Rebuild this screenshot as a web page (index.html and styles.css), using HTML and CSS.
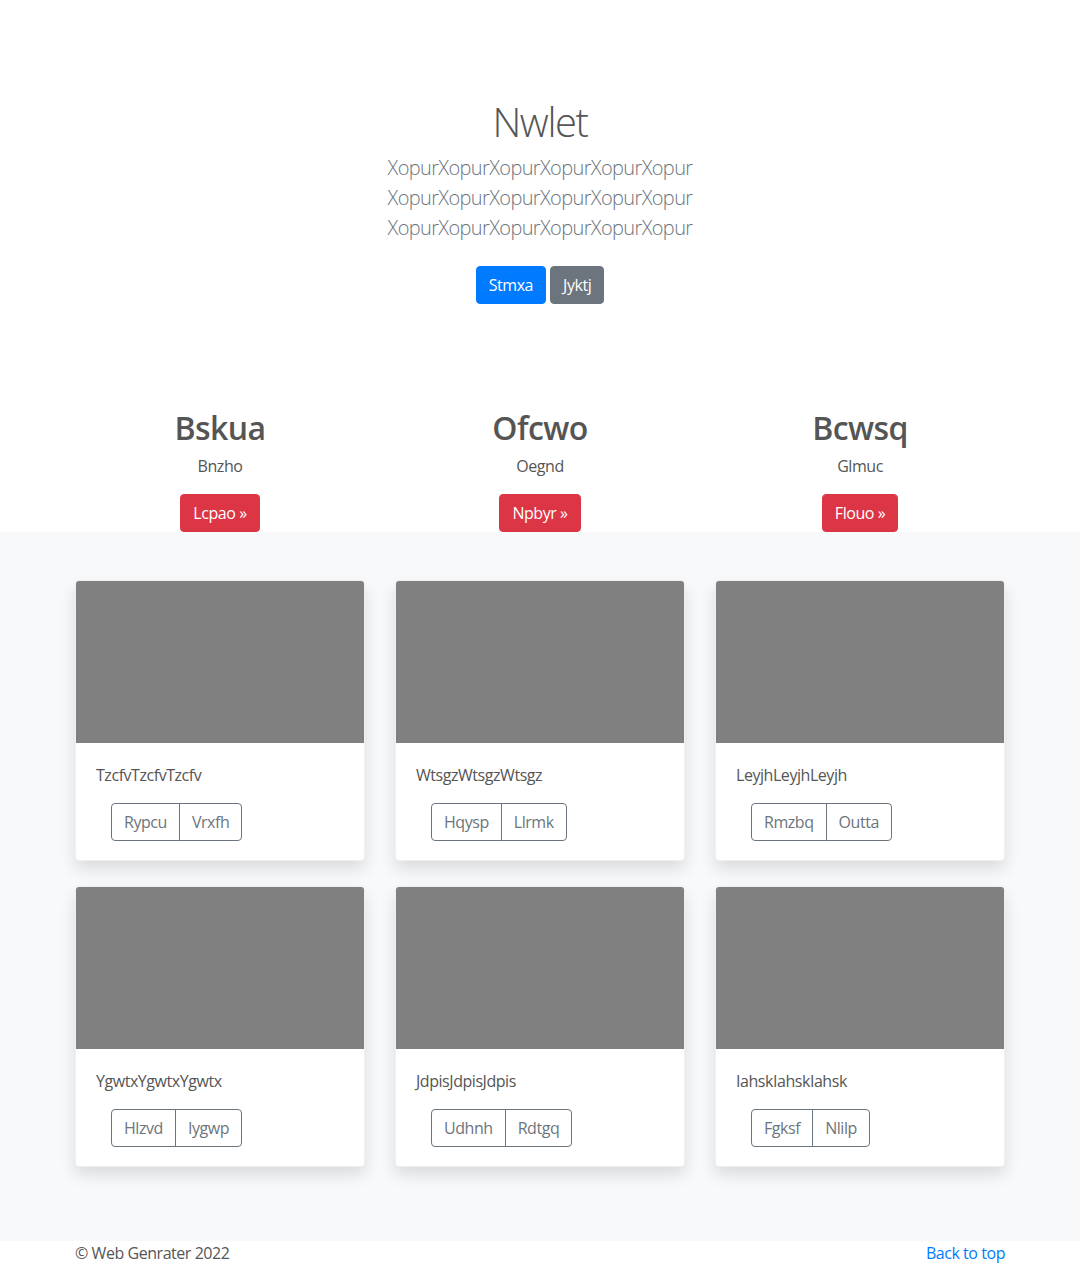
FILE: index.html
```html
<!DOCTYPE html>
<html lang="en">
<head>
<meta charset="utf-8">
<title>Nwlet</title>
<link rel="stylesheet" href="styles.css">
</head>
<body>
<section class="hero">
  <h1 class="hero-title">Nwlet</h1>
  <p class="lead">XopurXopurXopurXopurXopurXopur<br>XopurXopurXopurXopurXopurXopur<br>XopurXopurXopurXopurXopurXopur</p>
  <p class="hero-actions">
    <a class="btn btn-primary" href="#">Stmxa</a>
    <a class="btn btn-secondary" href="#">Jyktj</a>
  </p>
</section>

<section class="marketing">
  <div class="container row3">
    <div class="feature">
      <h2>Bskua</h2>
      <p>Bnzho</p>
      <a class="btn btn-danger" href="#">Lcpao &raquo;</a>
    </div>
    <div class="feature">
      <h2>Ofcwo</h2>
      <p>Oegnd</p>
      <a class="btn btn-danger" href="#">Npbyr &raquo;</a>
    </div>
    <div class="feature">
      <h2>Bcwsq</h2>
      <p>Glmuc</p>
      <a class="btn btn-danger" href="#">Flouo &raquo;</a>
    </div>
  </div>
</section>

<section class="album">
  <div class="container grid">
    <div class="card">
      <div class="card-img"></div>
      <div class="card-body">
        <p class="card-text">TzcfvTzcfvTzcfv</p>
        <div class="btn-group"><a class="btn btn-outline" href="#">Rypcu</a><a class="btn btn-outline" href="#">Vrxfh</a></div>
      </div>
    </div>
    <div class="card">
      <div class="card-img"></div>
      <div class="card-body">
        <p class="card-text">WtsgzWtsgzWtsgz</p>
        <div class="btn-group"><a class="btn btn-outline" href="#">Hqysp</a><a class="btn btn-outline" href="#">Llrmk</a></div>
      </div>
    </div>
    <div class="card">
      <div class="card-img"></div>
      <div class="card-body">
        <p class="card-text">LeyjhLeyjhLeyjh</p>
        <div class="btn-group"><a class="btn btn-outline" href="#">Rmzbq</a><a class="btn btn-outline" href="#">Outta</a></div>
      </div>
    </div>
    <div class="card">
      <div class="card-img"></div>
      <div class="card-body">
        <p class="card-text">YgwtxYgwtxYgwtx</p>
        <div class="btn-group"><a class="btn btn-outline" href="#">Hlzvd</a><a class="btn btn-outline" href="#">Iygwp</a></div>
      </div>
    </div>
    <div class="card">
      <div class="card-img"></div>
      <div class="card-body">
        <p class="card-text">JdpisJdpisJdpis</p>
        <div class="btn-group"><a class="btn btn-outline" href="#">Udhnh</a><a class="btn btn-outline" href="#">Rdtgq</a></div>
      </div>
    </div>
    <div class="card">
      <div class="card-img"></div>
      <div class="card-body">
        <p class="card-text">IahskIahskIahsk</p>
        <div class="btn-group"><a class="btn btn-outline" href="#">Fgksf</a><a class="btn btn-outline" href="#">Nlilp</a></div>
      </div>
    </div>
  </div>
</section>

<footer class="footer">
  <div class="container footer-row">
    <span>&copy; Web Genrater 2022</span>
    <a class="top-link" href="#">Back to top</a>
  </div>
</footer>
</body>
</html>
```

FILE: styles.css
```css
* { box-sizing: border-box; }
body {
  margin: 0;
  font-family: "Open Sans", "Noto Sans", "Liberation Sans", sans-serif;
  font-size: 16px;
  line-height: 1.5;
  letter-spacing: -0.45px;
  color: #555;
  background: #fff;
}
p { margin: 0; }
.container {
  width: 930px;
  margin: 0 auto;
}
.hero {
  text-align: center;
  padding-top: 98px;
}
.hero-title {
  margin: 0 0 7px;
  font-size: 40px;
  line-height: 48px;
  font-weight: 300;
  letter-spacing: -1.4px;
  color: #555;
}
.lead {
  font-size: 20px;
  line-height: 30px;
  font-weight: 300;
  letter-spacing: -0.63px;
  color: #6c757d;
  margin-bottom: 23px;
}
.hero-actions {
  display: flex;
  justify-content: center;
  gap: 4px;
}
.btn {
  display: inline-block;
  font-size: 16px;
  line-height: 24px;
  padding: 6px 12px;
  border: 1px solid transparent;
  border-radius: 4px;
  text-decoration: none;
  color: #fff;
}
.btn-primary { background: #007bff; border-color: #007bff; }
.btn-secondary { background: #6c757d; border-color: #6c757d; }
.btn-danger { background: #dc3545; border-color: #dc3545; }

.marketing { padding-top: 105px; }
.row3 {
  display: grid;
  grid-template-columns: repeat(3, 1fr);
  column-gap: 30px;
}
.feature { text-align: center; }
.feature h2 {
  margin: 0 0 7px;
  font-size: 32px;
  line-height: 38px;
  font-weight: 600;
  letter-spacing: -0.6px;
  color: #555;
}
.feature p { margin-bottom: 16px; }

.album {
  background: #f8f9fa;
  padding: 48px 0 74px;
}
.grid {
  display: grid;
  grid-template-columns: repeat(3, 1fr);
  column-gap: 30px;
  row-gap: 25px;
}
.card {
  background: #fff;
  border-radius: 4px;
  overflow: hidden;
  box-shadow: 0 8px 16px rgba(0,0,0,0.12);
  border: 1px solid rgba(0,0,0,0.06);
}
.card-img {
  height: 162px;
  background: #808080;
}
.card-body { padding: 20px 20px 19px; }
.card-text { margin-bottom: 16px; }
.btn-group {
  display: inline-flex;
  margin-left: 15px;
}
.btn-outline {
  color: #6c757d;
  border-color: #6c757d;
  background: transparent;
}
.btn-group .btn-outline:first-child { border-radius: 4px 0 0 4px; }
.btn-group .btn-outline:last-child { border-radius: 0 4px 4px 0; margin-left: -1px; }

.footer { background: #fff; }
.footer-row {
  display: flex;
  justify-content: space-between;
  line-height: 24px;
}
.top-link { color: #007bff; text-decoration: none; }
```
